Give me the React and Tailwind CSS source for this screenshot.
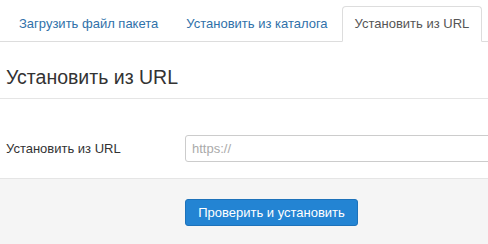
export default function App() {
    const tabs = [
        { id: 1, label: "Загрузить файл пакета", active: false },
        { id: 2, label: "Установить из каталога", active: false },
        { id: 3, label: "Установить из URL", active: true },
    ];

    return (
        <div className="w-[488px] h-[244px] overflow-hidden bg-white text-[#333] font-['Liberation_Sans',Arial,sans-serif]">
            {/* Tabs */}
            <ul className="flex pt-[6px] pl-[5px] border-b border-[#ddd] whitespace-nowrap">
                {tabs.map((tab) =>
                    tab.active ? (
                        <li
                            key={tab.id}
                            className="-mb-px px-[12px] h-[36px] flex items-center text-[13px] text-[#555] bg-white border border-[#ddd] border-b-white rounded-t-[4px]"
                        >
                            {tab.label}
                        </li>
                    ) : (
                        <li key={tab.id} className="px-[14px] h-[35px] flex items-center text-[13px] text-[#3071a9]">
                            {tab.label}
                        </li>
                    )
                )}
            </ul>

            {/* Heading */}
            <div className="pt-[23px] pl-[6px] pb-[8px] border-b border-[#e5e5e5]">
                <h2 className="text-[19.5px] leading-[25px] font-normal">Установить из URL</h2>
            </div>

            {/* Field */}
            <div className="flex items-center h-[79px] pt-[20px] pl-[6px]">
                <label className="w-[179px] shrink-0 text-[13px]">Установить из URL</label>
                <input
                    type="text"
                    placeholder="https://"
                    className="w-[320px] h-[27px] px-[6px] text-[13px] border border-[#ccc] rounded-[3px] placeholder:text-[#aaa] outline-none shrink-0"
                />
            </div>

            {/* Actions */}
            <div className="bg-[#f5f5f5] border-t border-[#e5e5e5] h-[70px] pt-[20px] pl-[185px]">
                <button className="w-[173px] h-[27px] text-[13px] text-white bg-[#2384d3] border border-[#1d72ba] rounded-[3px]">
                    Проверить и установить
                </button>
            </div>
        </div>
    );
}
